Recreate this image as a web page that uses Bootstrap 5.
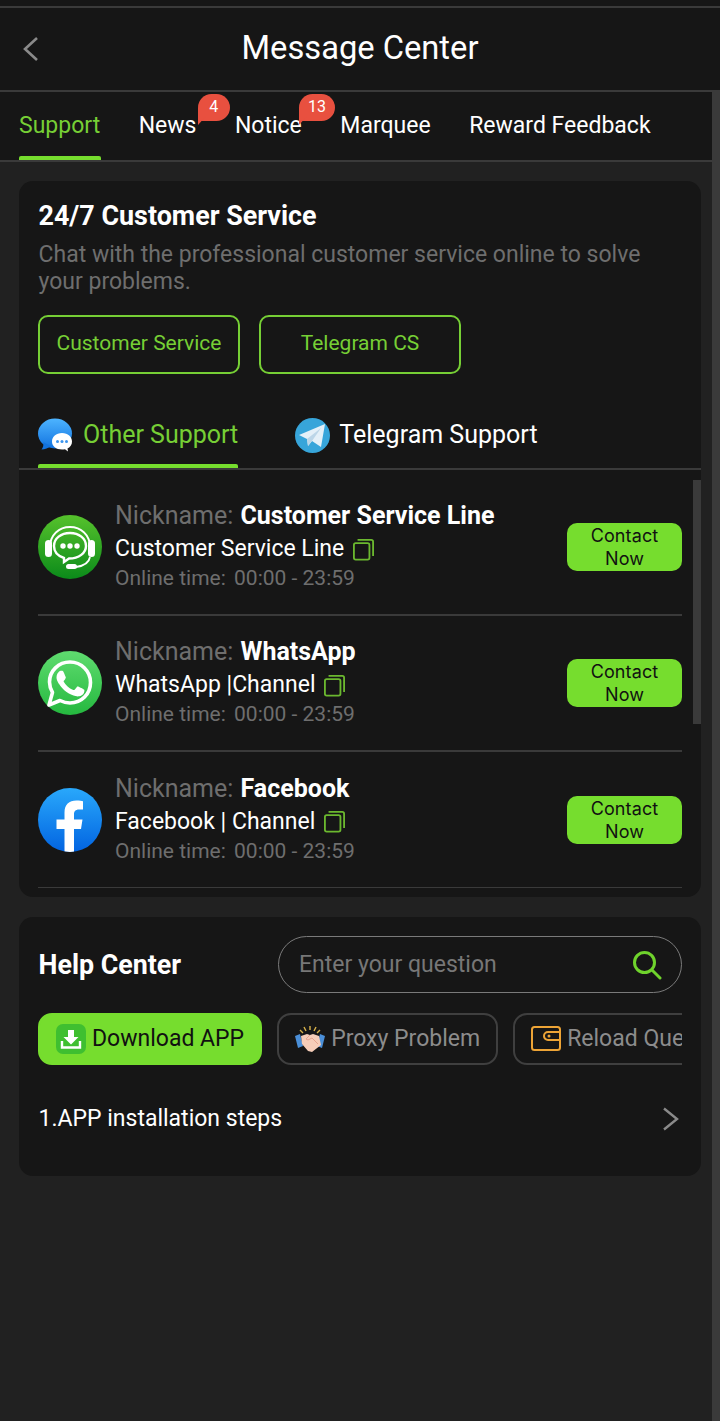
<!DOCTYPE html>
<html lang="en">
<head>
    <meta charset="UTF-8">
    <meta name="viewport" content="width=device-width, initial-scale=1.0">
    <link href="https://cdn.jsdelivr.net/npm/bootstrap@5.3.0/dist/css/bootstrap.min.css" rel="stylesheet">
    <title>Message Center</title>
    <style>
        html, body { height: 100%; }
        body { background: #212121; font-family: Roboto, "Liberation Sans", sans-serif; color: #fff; overflow: hidden; width: 720px; height: 1421px; }
        .top-strip { height: 8px; background: #161616; border-bottom: 2px solid #3a3a3a; }
        .head-bar { height: 84px; background: #161616; border-bottom: 2px solid #3a3a3a; padding-bottom: 2px; }
        .head-title { font-size: 32.7px; line-height: 1; }
        .back-btn { left: 22px; top: 28px; }
        .page-area { height: 1329px; }
        .main-col { flex: 1 1 0; min-width: 0; }
        .scroll-rail { width: 8px; background: #3a3a3a; flex: none; }
        .tab-bar { height: 70px; background: #161616; border-bottom: 2px solid #3a3a3a; padding-left: 19px; gap: 38.500px; }
        .tab-item { font-size: 23px; line-height: 1; height: 68px; padding-top: 22px; color: #fff; }
        .tab-item.on { color: #76cf35; }
        .tab-item.on::after { content: ""; position: absolute; left: 0; right: -1px; bottom: 0; height: 4px; background: #76dd2e; border-radius: 2px 2px 0 0; }
        .bubble { position: absolute; top: 2px; height: 27px; background: #e8503f; border-radius: 14px 14px 14px 4px; font-size: 16px; line-height: 25px; text-align: center; }
        .bubble::after { content: ""; position: absolute; left: 0; bottom: -4px; border-top: 9px solid #e8503f; border-right: 8px solid transparent; }
        .panel { background: #161616; border-radius: 14px; margin: 19px 11px 0 19px; }
        .panel-a { height: 716px; padding-top: 20px; }
        .panel-title { font-size: 26.900px; font-weight: 700; line-height: 30px; padding-left: 19.500px; }
        .panel-desc { font-size: 23px; line-height: 27px; color: #6e6e6e; padding: 10px 19.500px 0; }
        .cs-row { padding: 20px 19px 0; gap: 19px; }
        .cs-btn { width: 202px; height: 59px; border: 2px solid #76cf35; border-radius: 10px; color: #76cf35; font-size: 21px; background: none; padding: 0 0 2px; }
        .sub-tabs { height: 96px; border-bottom: 2px solid #3a3a3a; padding-left: 19px; gap: 57px; }
        .sub-tab { height: 94px; padding-top: 44px; font-size: 25px; line-height: 34px; gap: 10px; }
        .sub-tab.plain { gap: 9px; }
        .sub-tab.on { color: #76cf35; }
        .sub-tab.on::after { content: ""; position: absolute; left: 0; right: 0; bottom: 0; height: 4px; background: #76dd2e; border-radius: 2px 2px 0 0; }
        .svc-wrap { padding: 10px 19px 0; }
        .svc-row { height: 136px; border-bottom: 2px solid #3a3a3a; gap: 13px; }
        .svc-row:last-child { border-bottom-width: 1px; }
        .svc-ico { width: 64px; height: 64px; flex: none; }
        .svc-text { padding-bottom: 2px; }
        .nick { font-size: 25px; line-height: 30px; color: #6e6e6e; }
        .nick b { color: #fff; font-weight: 700; margin-left: 1px; }
        .svc-line { font-size: 23px; line-height: 30px; margin-top: 3px; gap: 9px; }
        .svc-line svg { width: 21px; height: 23px; }
        .svc-time { font-size: 21px; line-height: 26px; color: #6e6e6e; margin-top: 1px; }
        .svc-time span { margin-left: 3px; }
        .contact-btn { width: 115px; height: 48px; background: #76dd2e; color: #111; border: 0; border-radius: 10px; font-family: Inter, Roboto, sans-serif; font-size: 18px; line-height: 23px; padding: 0 16px; flex: none; margin-left: auto; letter-spacing: .1px; }
        .list-thumb { position: absolute; right: 11px; top: 388px; width: 8px; height: 244px; background: #3a3a3a; }
        .panel-b { height: 259px; margin-top: 20px; padding: 19px 19px 0; }
        .help-title { font-size: 26.800px; font-weight: 700; width: 240px; flex: none; padding: 1px 0 0 .5px; }
        .help-search { flex: 1; height: 57px; border: 1.5px solid #7a7a7a; border-radius: 29px; padding: 0 19px 0 20px; }
        .help-search input { background: none; border: 0; outline: 0; color: #fff; font-size: 23px; width: 100%; font-family: inherit; padding: 2px 0 0; }
        .help-search input::placeholder { color: #777; opacity: 1; }
        .chip-row { margin-top: 20px; gap: 15px; overflow: hidden; }
        .chip { height: 52px; flex: none; border: 2px solid #3f3f3f; border-radius: 14px; font-size: 23px; color: #8c8c8c; padding: 0 16px; gap: 6px; white-space: nowrap; background: none; }
        .chip.on { background: #76dd2e; border-color: #76dd2e; color: #111; }
        .faq-row { margin-top: 39px; font-size: 23px; line-height: 30px; padding-right: 3px; padding-left: .5px; }
    </style>
</head>
<body>

<div class="top-strip"></div>
<div class="head-bar position-relative d-flex align-items-center justify-content-center">
    <svg class="back-btn position-absolute" width="18" height="26" viewBox="0 0 18 26"><path d="M15 2 L3 13 L15 24" fill="none" stroke="#8a8a8a" stroke-width="2.600"/></svg>
    <div class="head-title">Message Center</div>
</div>

<div class="page-area d-flex">
    <div class="main-col position-relative">
        <div class="tab-bar d-flex">
            <div class="tab-item on position-relative">Support</div>
            <div class="tab-item position-relative">News<span class="bubble" style="left:59px;width:32px">4</span></div>
            <div class="tab-item position-relative">Notice<span class="bubble" style="left:64px;width:36px">13</span></div>
            <div class="tab-item position-relative">Marquee</div>
            <div class="tab-item position-relative">Reward Feedback</div>
        </div>

        <div class="panel panel-a">
            <div class="panel-title">24/7 Customer Service</div>
            <div class="panel-desc">Chat with the professional customer service online to solve your problems.</div>
            <div class="cs-row d-flex">
                <button class="cs-btn">Customer Service</button>
                <button class="cs-btn">Telegram CS</button>
            </div>
            <div class="sub-tabs d-flex">
                <div class="sub-tab on position-relative d-flex align-items-start">
                    <svg width="35" height="35" viewBox="0 0 35 35"><defs><linearGradient id="g1" x1="0" y1="0" x2="0" y2="1"><stop offset="0" stop-color="#4db4ff"/><stop offset="1" stop-color="#1273e0"/></linearGradient></defs><ellipse cx="17" cy="15.500" rx="17" ry="15" fill="url(#g1)"/><path d="M5 24c1 3 0 6-1.500 7.500 3.500 0 7-1.500 9-3.500Z" fill="#1273e0"/><path d="M24 15c-6 0-10 4-10 8.500 0 4.500 4 8 10 8 1 0 2 0 3-.3L30 33.500 29.500 30.500c3-1.500 4.500-4 4.500-7 0-4.500-4-8.500-10-8.500Z" fill="#fff"/><circle cx="19.500" cy="23.500" r="1.500" fill="#3b95ef"/><circle cx="24" cy="23.500" r="1.500" fill="#3b95ef"/><circle cx="28.500" cy="23.500" r="1.500" fill="#3b95ef"/></svg>
                    <span>Other Support</span>
                </div>
                <div class="sub-tab plain position-relative d-flex align-items-start">
                    <svg width="35" height="35" viewBox="0 0 35 35"><circle cx="17.500" cy="17.500" r="17.500" fill="#37a5da"/><path d="M4 17 L30 6 L26 29 L17 23 L13 28 L12 21 Z" fill="#e4f0f8"/><path d="M12 21 L26 10 L17 23 L13 28Z" fill="#bcd6e8"/></svg>
                    <span>Telegram Support</span>
                </div>
            </div>

            <div class="svc-wrap">
                <div class="svc-row d-flex align-items-center">
                    <svg class="svc-ico" viewBox="0 0 64 64"><defs><linearGradient id="g2" x1="0" y1="0" x2="0" y2="1"><stop offset="0" stop-color="#56c22c"/><stop offset="1" stop-color="#0b8a1a"/></linearGradient></defs><circle cx="32" cy="32" r="32" fill="url(#g2)"/><path d="M12 32C12 20 21 12 32 12s20 8 20 20" fill="none" stroke="#fff" stroke-width="1.800"/><rect x="7" y="25" width="7" height="17" rx="3.500" fill="#fff"/><rect x="50" y="25" width="7" height="17" rx="3.500" fill="#fff"/><path d="M32 18c-9 0-16 5.500-16 13 0 6 4 10 10 12l0 4 5-3.500c10 0 17-5.500 17-12.500 0-7.500-7-13-16-13Z" fill="none" stroke="#fff" stroke-width="2.400"/><circle cx="25" cy="31" r="2.700" fill="#fff"/><circle cx="32" cy="31" r="2.700" fill="#fff"/><circle cx="39" cy="31" r="2.700" fill="#fff"/><path d="M52 42c-1 6-7 9-14 10" fill="none" stroke="#fff" stroke-width="1.800"/><rect x="28" y="49" width="11" height="5" rx="2.500" fill="#fff"/></svg>
                    <div class="svc-text">
                        <div class="nick">Nickname: <b>Customer Service Line</b></div>
                        <div class="svc-line d-flex align-items-center">Customer Service Line
                            <svg viewBox="0 0 23 24"><rect x="1" y="5" width="17" height="18" rx="2" fill="none" stroke="#6bb82f" stroke-width="2"/><path d="M5 1.500h15a2 2 0 0 1 2 2V19" fill="none" stroke="#6bb82f" stroke-width="2"/></svg>
                        </div>
                        <div class="svc-time">Online time: <span>00:00 - 23:59</span></div>
                    </div>
                    <button class="contact-btn">Contact Now</button>
                </div>
                <div class="svc-row d-flex align-items-center">
                    <svg class="svc-ico" viewBox="0 0 64 64"><defs><linearGradient id="g3" x1="0" y1="0" x2="0" y2="1"><stop offset="0" stop-color="#5fdc6f"/><stop offset="1" stop-color="#25b83f"/></linearGradient></defs><circle cx="32" cy="32" r="32" fill="url(#g3)"/><path d="M11 54l3.500-12.500C12.500 38 11.500 35 11.500 31 11.500 20 20.500 11 32 11c5.500 0 10.500 2 14.500 6s6 9 6 14.500C52.500 43 43.500 52 32 52c-3.500 0-7-1-10-2.500Z" fill="none" stroke="#fff" stroke-width="3.600" stroke-linejoin="round"/><path d="M25.500 21c-.5-1.200-1-1.200-1.500-1.200h-1.300c-.5 0-1.200.2-1.800.9-.6.700-2.400 2.300-2.400 5.600s2.400 6.500 2.800 7c.3.500 4.700 7.500 11.700 10.300 5.800 2.300 7 1.800 8.200 1.700 1.300-.1 4.100-1.700 4.700-3.300.6-1.600.6-3 .4-3.300-.2-.3-.6-.5-1.300-.8-.7-.3-4.100-2-4.700-2.300-.6-.2-1.100-.3-1.500.4-.4.700-1.800 2.200-2.200 2.700-.4.500-.8.500-1.500.2-.7-.3-2.900-1.100-5.500-3.400-2-1.800-3.400-4-3.800-4.700-.4-.7 0-1 .3-1.400.3-.3.7-.8 1-1.200.3-.4.400-.7.600-1.100.2-.5.100-.8 0-1.200-.1-.3-1.500-3.700-2.200-5Z" fill="#fff"/></svg>
                    <div class="svc-text">
                        <div class="nick">Nickname: <b>WhatsApp</b></div>
                        <div class="svc-line d-flex align-items-center">WhatsApp |Channel
                            <svg viewBox="0 0 23 24"><rect x="1" y="5" width="17" height="18" rx="2" fill="none" stroke="#6bb82f" stroke-width="2"/><path d="M5 1.500h15a2 2 0 0 1 2 2V19" fill="none" stroke="#6bb82f" stroke-width="2"/></svg>
                        </div>
                        <div class="svc-time">Online time: <span>00:00 - 23:59</span></div>
                    </div>
                    <button class="contact-btn">Contact Now</button>
                </div>
                <div class="svc-row d-flex align-items-center">
                    <svg class="svc-ico" viewBox="0 0 64 64"><defs><linearGradient id="g4" x1="0" y1="0" x2="0" y2="1"><stop offset="0" stop-color="#29a8fb"/><stop offset="1" stop-color="#0264e1"/></linearGradient><clipPath id="c4"><circle cx="32" cy="32" r="32"/></clipPath></defs><circle cx="32" cy="32" r="32" fill="url(#g4)"/><path clip-path="url(#c4)" d="M26.500 64V41H18.500V31.500H26.500V24.500C26.500 16.500 31 12.500 38.500 12.500c3 0 5.500.5 6.500.7V21.500H41c-3.800 0-5 2.200-5 4.700V31.500H44.500L43 41H36V64Z" fill="#fff"/></svg>
                    <div class="svc-text">
                        <div class="nick">Nickname: <b>Facebook</b></div>
                        <div class="svc-line d-flex align-items-center">Facebook | Channel
                            <svg viewBox="0 0 23 24"><rect x="1" y="5" width="17" height="18" rx="2" fill="none" stroke="#6bb82f" stroke-width="2"/><path d="M5 1.500h15a2 2 0 0 1 2 2V19" fill="none" stroke="#6bb82f" stroke-width="2"/></svg>
                        </div>
                        <div class="svc-time">Online time: <span>00:00 - 23:59</span></div>
                    </div>
                    <button class="contact-btn">Contact Now</button>
                </div>
            </div>
        </div>
        <div class="list-thumb"></div>

        <div class="panel panel-b">
            <div class="d-flex align-items-center">
                <div class="help-title">Help Center</div>
                <div class="help-search d-flex align-items-center">
                    <input type="text" placeholder="Enter your question">
                    <svg width="30" height="30" viewBox="0 0 30 30" class="flex-shrink-0"><circle cx="12.500" cy="12.500" r="10" fill="none" stroke="#6fd32c" stroke-width="3"/><path d="M20 20 L28 28" stroke="#6fd32c" stroke-width="3" stroke-linecap="round"/></svg>
                </div>
            </div>
            <div class="chip-row d-flex">
                <button class="chip on d-flex align-items-center">
                    <svg width="30" height="30" viewBox="0 0 30 30" class="flex-shrink-0"><rect width="30" height="30" rx="7" fill="#3fbf30"/><path d="M12 6h6v7h4.500L15 20.500 7.500 13H12Z" fill="#fff"/><path d="M6 17v6.500h18V17" fill="none" stroke="#fff" stroke-width="2.400"/></svg>
                    Download APP
                </button>
                <button class="chip d-flex align-items-center">
                    <svg width="30" height="30" viewBox="0 0 30 30" class="flex-shrink-0"><path d="M0 12l5-2 3 12-5 2Z" fill="#4a8fd8"/><path d="M30 12l-5-2-3 12 5 2Z" fill="#4a8fd8"/><path d="M6 12l6-2 3 1 3-1 6 2 2 9-9 7-4-1-6-7Z" fill="#f6cdb8"/><path d="M15 11l-4 4 2 1 4-2 6 6" fill="none" stroke="#e6a48e" stroke-width="1"/><path d="M15 2v4M9 3l2 4M21 3l-2 4M5 6l3 3M25 6l-3 3" stroke="#d8b24a" stroke-width="1.400"/></svg>
                    Proxy Problem
                </button>
                <button class="chip d-flex align-items-center">
                    <svg width="30" height="26" viewBox="0 0 30 26" class="flex-shrink-0"><rect x="1" y="1" width="28" height="23" rx="2.500" fill="none" stroke="#eda436" stroke-width="2"/><path d="M29 6H17a3.500 3.500 0 0 0 0 8h12" fill="none" stroke="#eda436" stroke-width="2"/><circle cx="18" cy="10" r="1.500" fill="#eda436"/></svg>
                    Reload Question
                </button>
            </div>
            <div class="faq-row d-flex align-items-center justify-content-between">
                <span>1.APP installation steps</span>
                <svg width="17" height="24" viewBox="0 0 17 24"><path d="M2 1.500 L15 12 L2 22.500" fill="none" stroke="#8a8a8a" stroke-width="2.400"/></svg>
            </div>
        </div>
    </div>
    <div class="scroll-rail"></div>
</div>

<script src="https://cdn.jsdelivr.net/npm/bootstrap@5.3.0/dist/js/bootstrap.bundle.min.js"></script>
</body>
</html>
